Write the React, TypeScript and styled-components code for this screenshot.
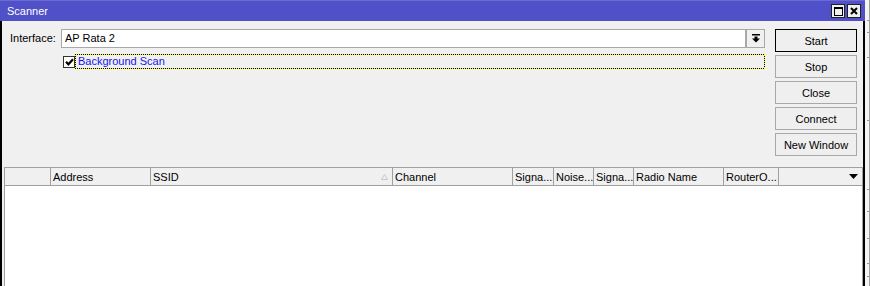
import React from 'react'
import styled, { createGlobalStyle } from 'styled-components'

const GlobalStyle = createGlobalStyle`
  html, body {
    margin: 0;
    padding: 0;
  }
  body {
    width: 870px;
    height: 286px;
    overflow: hidden;
    font-family: "Liberation Sans", Arial, sans-serif;
    font-size: 11px;
    color: #000;
  }
  * {
    box-sizing: border-box;
  }
`

const Page = styled.div`
  display: flex;
  width: 870px;
  height: 286px;
  background: #f0f0f0;
`
const Win = styled.div`
  width: 865px;
  height: 286px;
  display: flex;
  flex-direction: column;
`
const TitleBar = styled.div`
  height: 21px;
  flex: none;
  display: flex;
  align-items: center;
  justify-content: space-between;
  padding: 0 4px 0 7px;
  background: #5050c8;
  border-top: 1px solid #6a6ad2;
`
const Title = styled.span`
  color: #fff;
  font-size: 11px;
`
const TitleButtons = styled.div`
  display: flex;
  gap: 2px;
`
const TitleButton = styled.div`
  width: 14px;
  height: 14px;
  display: flex;
  align-items: center;
  justify-content: center;
  background: #f0f0f0;
  border: 1px solid #202020;
`
const Body = styled.div`
  flex: 1;
  min-height: 0;
  display: flex;
  flex-direction: column;
  background: #f0f0f0;
  border-left: 2px solid #000;
  border-right: 2px solid #000;
`
const FormArea = styled.div`
  display: flex;
  gap: 10px;
  padding: 8px 6px 0 8px;
`
const Fields = styled.div`
  flex: 1;
  display: flex;
  flex-direction: column;
`
const FieldRow = styled.div`
  display: flex;
  height: 19px;
`
const Label = styled.label`
  width: 51px;
  line-height: 19px;
  color: #000;
`
const ComboInput = styled.div`
  flex: 1;
  background: #fff;
  border: 1px solid #a8a8a8;
  padding-left: 3px;
  line-height: 17px;
`
const ComboButton = styled.div`
  width: 19px;
  display: flex;
  align-items: center;
  justify-content: center;
  background: #f0f0f0;
  border: 1px solid #a8a8a8;
`
const CheckRow = styled.div`
  display: flex;
  align-items: center;
  height: 15px;
  margin-top: 6px;
  padding-left: 53px;
`
const CheckBox = styled.div`
  width: 12px;
  height: 12px;
  flex: none;
  display: flex;
  align-items: center;
  justify-content: center;
  background: #fff;
  border: 1px solid #333;
`
const FocusLabel = styled.div`
  flex: 1;
  height: 15px;
  padding-left: 2px;
  line-height: 13px;
  color: #1414f0;
  border: 1px solid transparent;
  background:
    repeating-linear-gradient(90deg, #000 0 1px, #ffff00 1px 2px) top / 100% 1px no-repeat,
    repeating-linear-gradient(90deg, #000 0 1px, #ffff00 1px 2px) bottom / 100% 1px no-repeat,
    repeating-linear-gradient(0deg, #000 0 1px, #ffff00 1px 2px) left / 1px 100% no-repeat,
    repeating-linear-gradient(0deg, #000 0 1px, #ffff00 1px 2px) right / 1px 100% no-repeat;
  background-origin: border-box;
`
const ButtonColumn = styled.div`
  width: 82px;
  display: flex;
  flex-direction: column;
  gap: 3px;
`
const Button = styled.div<{ $default?: boolean }>`
  height: 23px;
  display: flex;
  align-items: center;
  justify-content: center;
  background: #efefef;
  border: 1px solid ${p => (p.$default ? '#000' : '#a8a8a8')};
  color: #000;
`
const Table = styled.div`
  flex: 1;
  min-height: 0;
  margin: 11px 0 0 2px;
  display: flex;
  flex-direction: column;
  background: #fff;
  border: 1px solid #a0a0a0;
  border-bottom: none;
`
const HeaderRow = styled.div`
  height: 18px;
  flex: none;
  display: flex;
  background: #f0f0f0;
  border-bottom: 1px solid #a0a0a0;
`
const HeaderCell = styled.div<{ $w?: number }>`
  ${p => (p.$w ? `width: ${p.$w}px; flex: none;` : 'flex: 1;')}
  display: flex;
  align-items: center;
  padding: 0 4px 0 2px;
  overflow: hidden;
  white-space: nowrap;
  border-right: ${p => (p.$w ? '1px solid #a0a0a0' : 'none')};
`
const CellText = styled.span`
  flex: 1;
`
const Backdrop = styled.div`
  flex: 1;
  display: flex;
  flex-direction: column;
  background: #f4f4f4;
  border-left: 2px solid #f4f4f4;
  border-right: 1px solid #a0a0a0;
`
const BackdropBand = styled.div<{ $h: number }>`
  height: ${p => p.$h}px;
  flex: none;
  border-bottom: 1px solid #9a9a9a;
`

const columns = [
  { w: 46, label: '' },
  { w: 100, label: 'Address' },
  { w: 242, label: 'SSID', sorted: true },
  { w: 120, label: 'Channel' },
  { w: 41, label: 'Signa...' },
  { w: 40, label: 'Noise...' },
  { w: 40, label: 'Signa...' },
  { w: 90, label: 'Radio Name' },
  { w: 55, label: 'RouterO...' },
]

const bands = [21, 12, 25, 63, 69, 22, 27, 25, 13]

const ComboIcon = () => (
  <svg width="8" height="9" viewBox="0 0 8 9">
    <rect x="0" y="0" width="8" height="1.5" fill="#000" />
    <rect x="2.5" y="2.5" width="3" height="2.5" fill="#000" />
    <polygon points="0,4.5 8,4.5 4,8.5" fill="#000" />
  </svg>
)

const Check = () => (
  <svg width="9" height="8" viewBox="0 0 9 8">
    <path d="M1 3.8 L3.4 6.3 L8 1.2" stroke="#000" strokeWidth="2.2" fill="none" />
  </svg>
)

const SortArrow = () => (
  <svg width="7" height="6" viewBox="0 0 7 6">
    <path d="M3.5 0.5 L6.5 5.5 L0.5 5.5 Z" fill="none" stroke="#c8c8c8" strokeWidth="1" />
  </svg>
)

const MenuArrow = () => (
  <svg width="9" height="5" viewBox="0 0 9 5">
    <polygon points="0,0 9,0 4.5,5" fill="#000" />
  </svg>
)

export default function App() {
  return (
    <>
      <GlobalStyle />
      <Page>
        <Win>
          <TitleBar>
            <Title>Scanner</Title>
            <TitleButtons>
              <TitleButton>
                <svg width="9" height="9" viewBox="0 0 9 9">
                  <rect x="0.5" y="0.5" width="8" height="8" fill="none" stroke="#000" />
                  <rect x="0" y="0" width="9" height="2" fill="#000" />
                </svg>
              </TitleButton>
              <TitleButton>
                <svg width="8" height="8" viewBox="0 0 8 8">
                  <path d="M1 1 L7 7 M7 1 L1 7" stroke="#000" strokeWidth="2" />
                </svg>
              </TitleButton>
            </TitleButtons>
          </TitleBar>
          <Body>
            <FormArea>
              <Fields>
                <FieldRow>
                  <Label>Interface:</Label>
                  <ComboInput>AP Rata 2</ComboInput>
                  <ComboButton>
                    <ComboIcon />
                  </ComboButton>
                </FieldRow>
                <CheckRow>
                  <CheckBox>
                    <Check />
                  </CheckBox>
                  <FocusLabel>Background Scan</FocusLabel>
                </CheckRow>
              </Fields>
              <ButtonColumn>
                <Button $default>Start</Button>
                <Button>Stop</Button>
                <Button>Close</Button>
                <Button>Connect</Button>
                <Button>New Window</Button>
              </ButtonColumn>
            </FormArea>
            <Table>
              <HeaderRow>
                {columns.map((c, i) => (
                  <HeaderCell key={i} $w={c.w}>
                    <CellText>{c.label}</CellText>
                    {c.sorted && <SortArrow />}
                  </HeaderCell>
                ))}
                <HeaderCell>
                  <CellText />
                  <MenuArrow />
                </HeaderCell>
              </HeaderRow>
            </Table>
          </Body>
        </Win>
        <Backdrop>
          {bands.map((h, i) => (
            <BackdropBand key={i} $h={h} />
          ))}
        </Backdrop>
      </Page>
    </>
  )
}
